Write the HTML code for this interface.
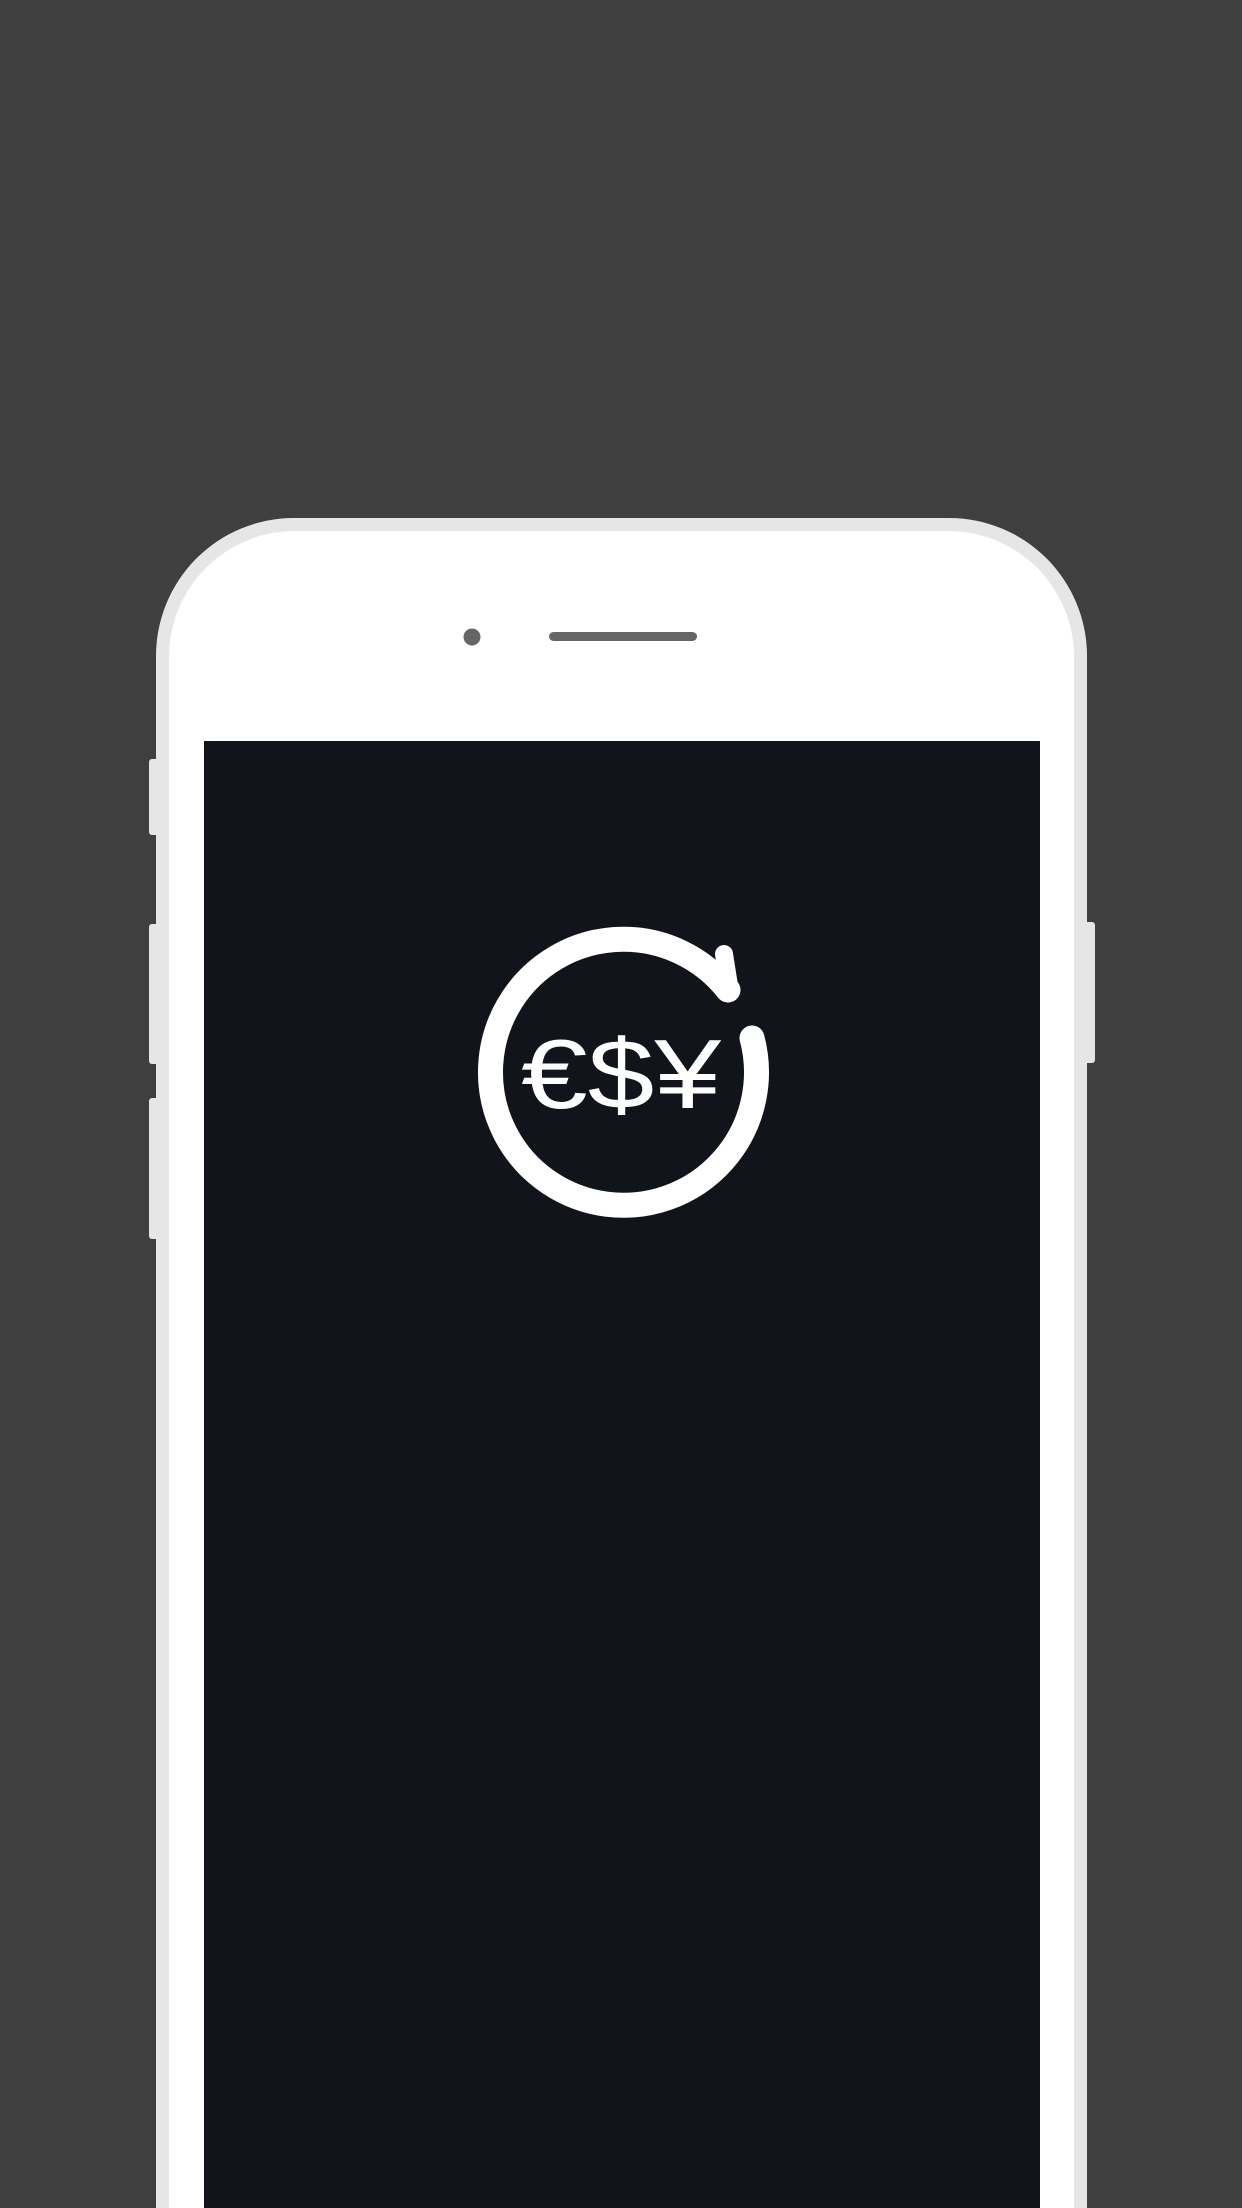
<!DOCTYPE html>
<html><head><style>
html,body{margin:0;padding:0;width:1242px;height:2208px;background:#3f3f3f;overflow:hidden}
svg{display:block}
</style></head><body>
<svg width="1242" height="2208" viewBox="0 0 1242 2208" xmlns="http://www.w3.org/2000/svg">
<rect x="149" y="759" width="10" height="76" rx="3" fill="#e6e6e6"/>
<rect x="149" y="924" width="10" height="140" rx="3" fill="#e6e6e6"/>
<rect x="149" y="1098" width="10" height="141" rx="3" fill="#e6e6e6"/>
<rect x="1083" y="922" width="12" height="141" rx="3" fill="#e6e6e6"/>
<path d="M156 2208 V656 A138 138 0 0 1 294 518 H949 A138 138 0 0 1 1087 656 V2208 Z" fill="#e6e6e6"/>
<path d="M169 2208 V657 A126 126 0 0 1 295 531 H948 A126 126 0 0 1 1074 657 V2208 Z" fill="#ffffff"/>
<circle cx="472" cy="637" r="8.5" fill="#666"/>
<rect x="549" y="632" width="148" height="9" rx="4.5" fill="#666"/>
<rect x="204" y="741" width="836" height="1467" fill="#11141b"/>
<path d="M 752 1038 A 133 133 0 1 1 728 990" fill="none" stroke="#fff" stroke-width="25" stroke-linecap="round"/>
<path d="M 730 992 L 724 954" fill="none" stroke="#fff" stroke-width="18" stroke-linecap="round"/>
<text x="521" y="1108" font-family="DejaVu Sans ExtraLight, Liberation Sans, sans-serif" font-weight="200" font-size="98" fill="#fff" textLength="200" lengthAdjust="spacingAndGlyphs">€$¥</text>
</svg>
</body></html>
